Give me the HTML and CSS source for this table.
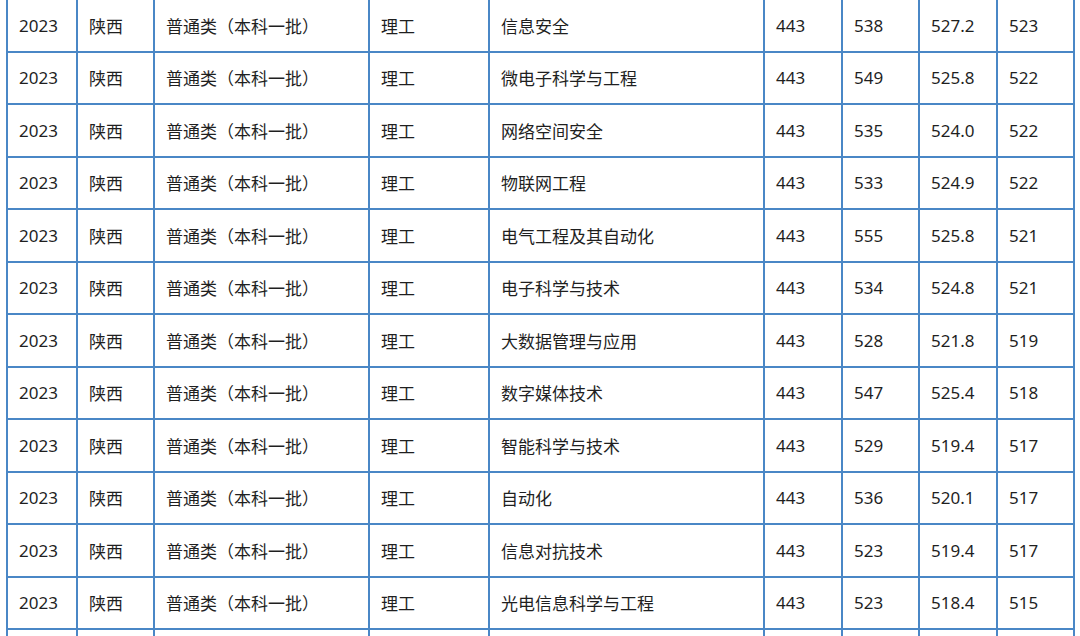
FILE: index.html
```html
<!DOCTYPE html>
<html lang="zh-CN">
<head>
<meta charset="utf-8">
<title>录取分数</title>
<link rel="stylesheet" href="styles.css">
</head>
<body>
<div class="grid">
  <div class="c">2023</div><div class="c">陕西</div><div class="c">普通类（本科一批）</div><div class="c">理工</div><div class="c">信息安全</div><div class="c">443</div><div class="c">538</div><div class="c">527.2</div><div class="c">523</div>
  <div class="c">2023</div><div class="c">陕西</div><div class="c">普通类（本科一批）</div><div class="c">理工</div><div class="c">微电子科学与工程</div><div class="c">443</div><div class="c">549</div><div class="c">525.8</div><div class="c">522</div>
  <div class="c">2023</div><div class="c">陕西</div><div class="c">普通类（本科一批）</div><div class="c">理工</div><div class="c">网络空间安全</div><div class="c">443</div><div class="c">535</div><div class="c">524.0</div><div class="c">522</div>
  <div class="c">2023</div><div class="c">陕西</div><div class="c">普通类（本科一批）</div><div class="c">理工</div><div class="c">物联网工程</div><div class="c">443</div><div class="c">533</div><div class="c">524.9</div><div class="c">522</div>
  <div class="c">2023</div><div class="c">陕西</div><div class="c">普通类（本科一批）</div><div class="c">理工</div><div class="c">电气工程及其自动化</div><div class="c">443</div><div class="c">555</div><div class="c">525.8</div><div class="c">521</div>
  <div class="c">2023</div><div class="c">陕西</div><div class="c">普通类（本科一批）</div><div class="c">理工</div><div class="c">电子科学与技术</div><div class="c">443</div><div class="c">534</div><div class="c">524.8</div><div class="c">521</div>
  <div class="c">2023</div><div class="c">陕西</div><div class="c">普通类（本科一批）</div><div class="c">理工</div><div class="c">大数据管理与应用</div><div class="c">443</div><div class="c">528</div><div class="c">521.8</div><div class="c">519</div>
  <div class="c">2023</div><div class="c">陕西</div><div class="c">普通类（本科一批）</div><div class="c">理工</div><div class="c">数字媒体技术</div><div class="c">443</div><div class="c">547</div><div class="c">525.4</div><div class="c">518</div>
  <div class="c">2023</div><div class="c">陕西</div><div class="c">普通类（本科一批）</div><div class="c">理工</div><div class="c">智能科学与技术</div><div class="c">443</div><div class="c">529</div><div class="c">519.4</div><div class="c">517</div>
  <div class="c">2023</div><div class="c">陕西</div><div class="c">普通类（本科一批）</div><div class="c">理工</div><div class="c">自动化</div><div class="c">443</div><div class="c">536</div><div class="c">520.1</div><div class="c">517</div>
  <div class="c">2023</div><div class="c">陕西</div><div class="c">普通类（本科一批）</div><div class="c">理工</div><div class="c">信息对抗技术</div><div class="c">443</div><div class="c">523</div><div class="c">519.4</div><div class="c">517</div>
  <div class="c">2023</div><div class="c">陕西</div><div class="c">普通类（本科一批）</div><div class="c">理工</div><div class="c">光电信息科学与工程</div><div class="c">443</div><div class="c">523</div><div class="c">518.4</div><div class="c">515</div>
  <div class="c"></div><div class="c"></div><div class="c"></div><div class="c"></div><div class="c"></div><div class="c"></div><div class="c"></div><div class="c"></div><div class="c"></div>
</div>
</body>
</html>
```
FILE: styles.css
```css
html, body {
  margin: 0;
  padding: 0;
  background: #ffffff;
  overflow: hidden;
}

.grid {
  display: grid;
  grid-template-columns: 68px 75px 213px 118px 273px 76px 75px 76px 75px;
  grid-auto-rows: 50.5px;
  gap: 2px;
  padding: 2px;
  width: max-content;
  background: #4a87c6;
  margin: -2px 0 0 6px;
}

.c {
  background: #ffffff;
  display: flex;
  align-items: center;
  padding-left: 11px;
  font-family: "Noto Sans", "Noto Sans CJK SC", sans-serif;
  font-size: 17px;
  color: #1f1f1f;
  white-space: nowrap;
}
```
